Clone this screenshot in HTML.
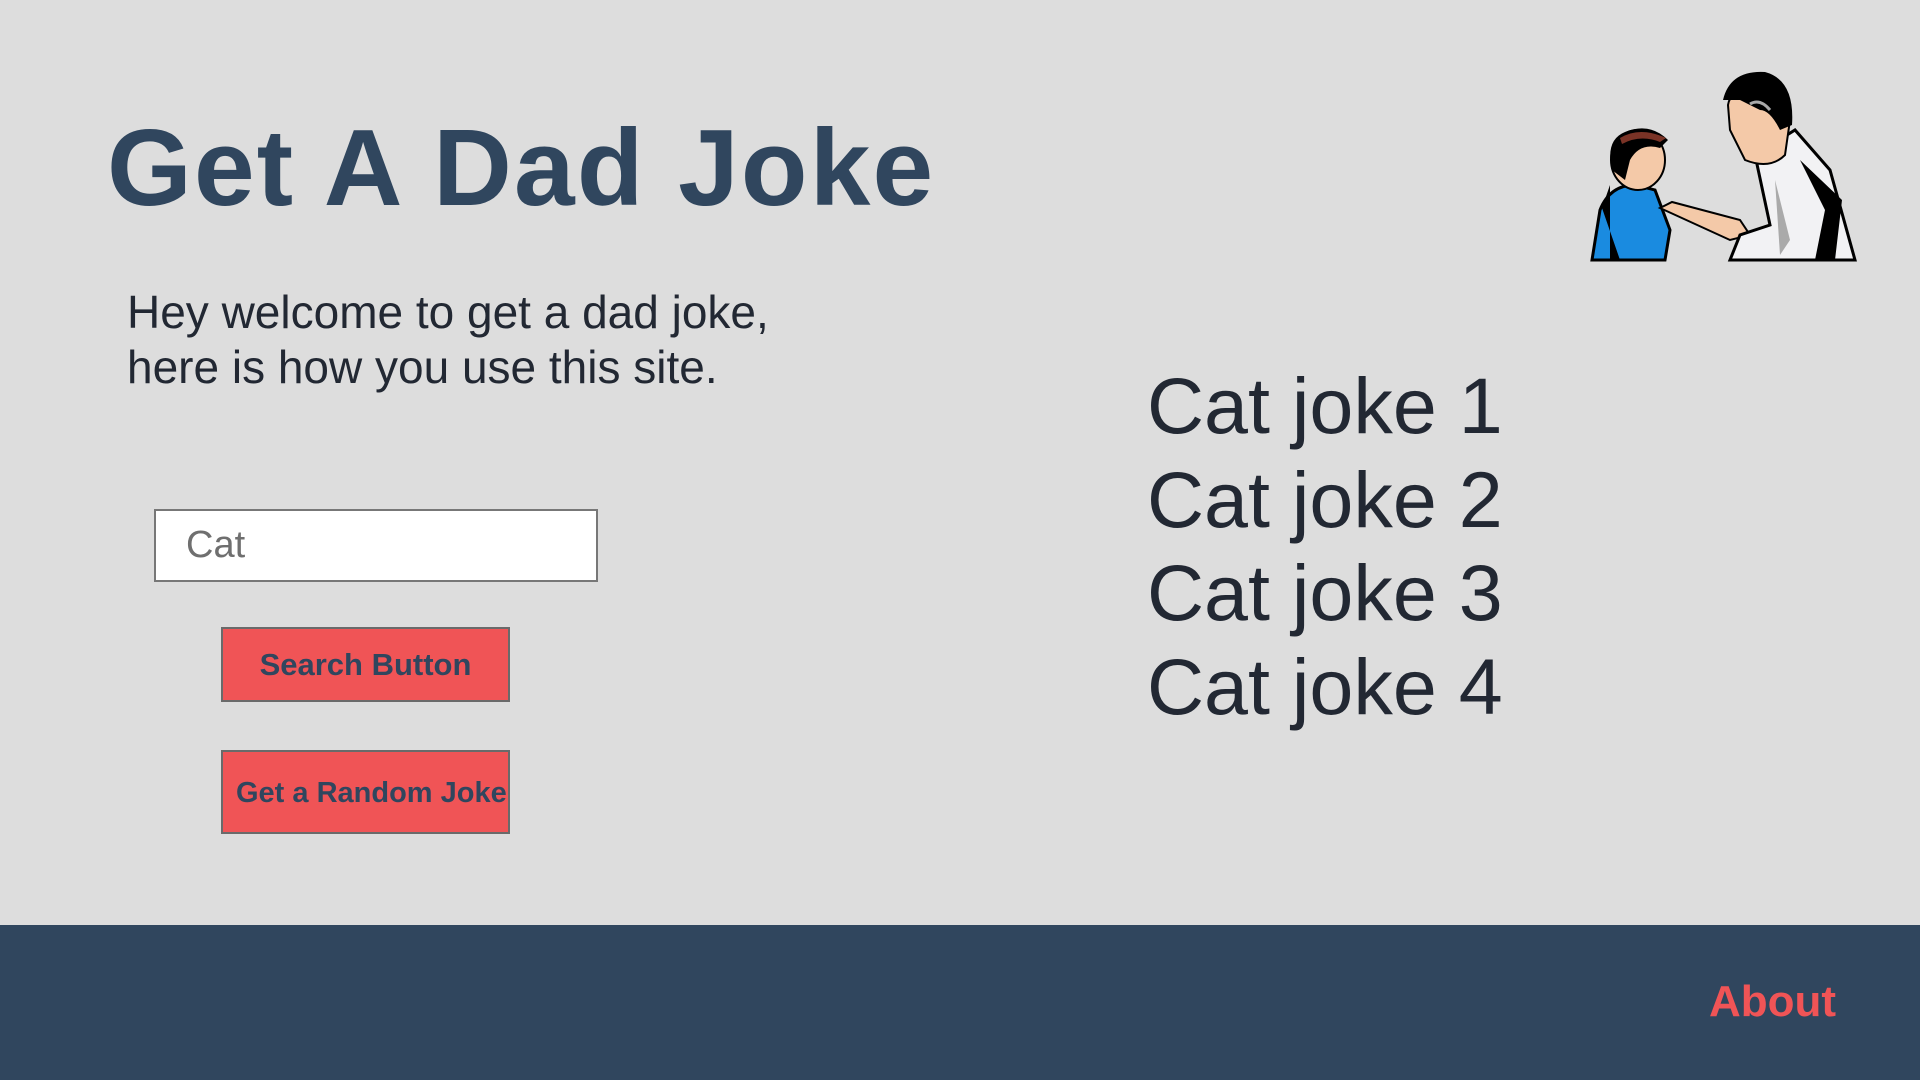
<!DOCTYPE html>
<html><head><meta charset="utf-8"><style>
*{margin:0;padding:0;box-sizing:border-box}
body{width:1920px;height:1080px;background:#dddddd;position:relative;overflow:hidden;font-family:"Liberation Sans",sans-serif}
.abs{position:absolute;white-space:nowrap}
h1{position:absolute;left:107px;top:103px;font-size:109px;font-weight:bold;color:#30465e;line-height:130px;letter-spacing:2.2px}
.intro{left:127px;top:285px;font-size:46px;line-height:55px;color:#222833}
.input{left:154px;top:509px;width:444px;height:73px;background:#fff;border:2px solid #777;font-size:38px;color:#6f6f6f;padding-left:30px;line-height:69px}
.btn{left:221px;width:289px;background:#f05456;border:2px solid #6a6a6a;color:#30465e;font-weight:bold;font-size:31px;text-align:center}
.jokes{left:1147px;top:359px;font-size:79px;line-height:93.5px;color:#222833}
footer{position:absolute;left:0;top:925px;width:1920px;height:155px;background:#30465e}
.about{left:1709px;top:977px;font-size:44px;font-weight:bold;color:#f05456}
</style></head><body>
<h1>Get A Dad Joke</h1>
<div class="abs intro">Hey welcome to get a dad joke,<br>here is how you use this site.</div>
<div class="abs input">Cat</div>
<div class="abs btn" style="top:627px;height:75px;line-height:71px">Search Button</div>
<div class="abs btn" style="top:750px;height:84px;line-height:82px;font-size:29px;text-align:left;padding-left:13px">Get a Random Joke</div>
<div class="abs jokes">Cat joke 1<br>Cat joke 2<br>Cat joke 3<br>Cat joke 4</div>
<svg class="abs" style="left:1580px;top:60px" width="280" height="205" viewBox="0 0 280 205">
 <path d="M12 200 L20 150 Q30 125 55 125 L75 130 L90 170 L85 200 Z" fill="#1a8be0" stroke="#000" stroke-width="3"/>
 <path d="M30 125 L22 148 L40 200 L30 200 Z" fill="#000"/>
 <ellipse cx="58" cy="100" rx="27" ry="30" fill="#f4c9a8" stroke="#000" stroke-width="2"/>
 <path d="M32 110 Q25 80 45 72 Q70 62 88 80 L80 88 Q60 82 50 100 L45 120 Z" fill="#000"/>
 <path d="M40 78 Q60 66 86 78 L80 82 Q60 74 42 84 Z" fill="#7a3326"/>
 <path d="M80 148 L92 142 L160 160 L170 175 L150 180 Z" fill="#f4c9a8" stroke="#000" stroke-width="2"/>
 <path d="M175 95 L215 70 L250 110 L275 200 L150 200 L160 175 L190 165 Z" fill="#f2f2f4" stroke="#000" stroke-width="3"/>
 <path d="M220 100 L245 150 L235 200 L255 200 L262 140 Z" fill="#000"/>
 <path d="M195 120 L210 180 L200 195 Z" fill="#aaa"/>
 <path d="M148 45 Q150 30 175 28 Q200 28 210 60 L205 95 Q190 110 165 100 Q155 80 150 70 Z" fill="#f4c9a8" stroke="#000" stroke-width="2"/>
 <path d="M143 40 Q150 10 185 12 Q215 20 212 65 L200 70 Q190 50 180 50 L160 40 Z" fill="#000"/>
 <path d="M170 44 Q180 38 190 50" stroke="#aaa" stroke-width="3" fill="none"/>
</svg>
<footer></footer>
<div class="abs about">About</div>
</body></html>
